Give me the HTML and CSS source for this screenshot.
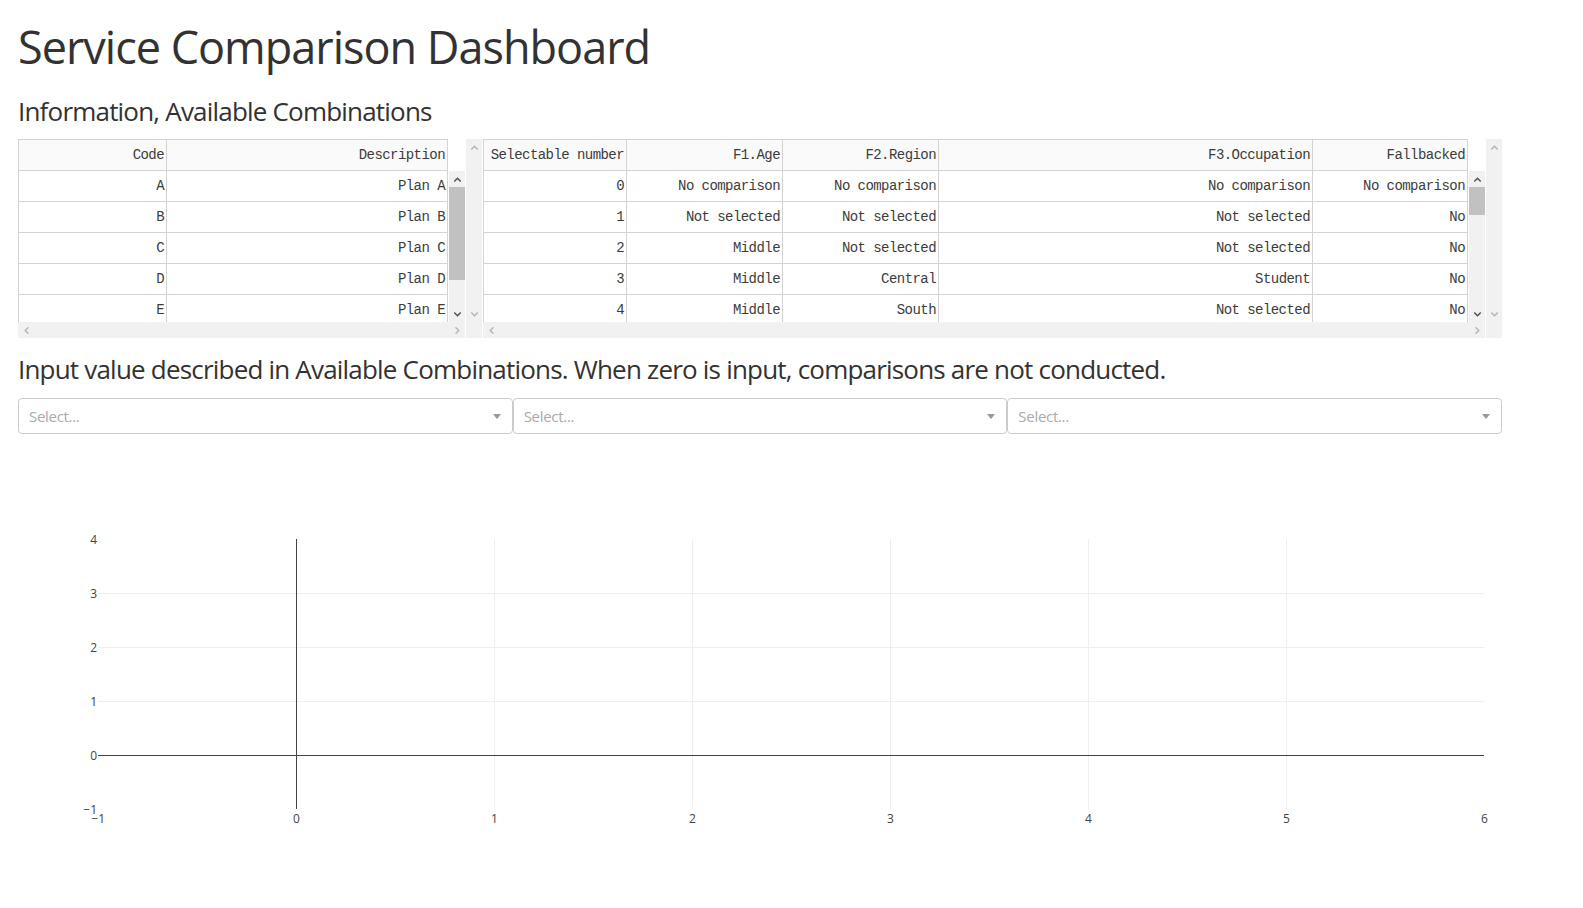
FILE: index.html
```html
<!DOCTYPE html>
<html lang="en">
<head>
<meta charset="utf-8">
<title>Service Comparison Dashboard</title>
<link rel="stylesheet" href="styles.css">
</head>
<body>
<div class="app">
  <h1 class="title">Service Comparison Dashboard</h1>
  <h4 class="section section-info">Information, Available Combinations</h4>

  <div class="tables">
    <!-- left table -->
    <div class="dt dt-left">
      <div class="dt-main">
        <div class="head-line">
          <div class="row row-head cols-left">
            <div class="cell">Code</div><div class="cell last">Description</div>
          </div>
        </div>
        <div class="body-line">
          <div class="body body-left">
            <div class="row cols-left"><div class="cell">A</div><div class="cell last">Plan A</div></div>
            <div class="row cols-left"><div class="cell">B</div><div class="cell last">Plan B</div></div>
            <div class="row cols-left"><div class="cell">C</div><div class="cell last">Plan C</div></div>
            <div class="row cols-left"><div class="cell">D</div><div class="cell last">Plan D</div></div>
            <div class="row cols-left"><div class="cell">E</div><div class="cell last">Plan E</div></div>
          </div>
          <div class="vsb">
            <div class="sb-btn"><svg width="7" height="5" viewBox="0 0 7 5"><polyline class="chev dark" points="0.8,4 3.5,1.2 6.2,4"/></svg></div>
            <div class="sb-track"><div class="thumb thumb-left"></div></div>
            <div class="sb-btn"><svg width="7" height="5" viewBox="0 0 7 5"><polyline class="chev dark" points="0.8,1 3.5,3.8 6.2,1"/></svg></div>
          </div>
        </div>
        <div class="hsb">
          <div class="sb-btn-h"><svg width="5" height="7" viewBox="0 0 5 7"><polyline class="chev light" points="4,0.8 1.2,3.5 4,6.2"/></svg></div>
          <div class="sb-track-h"></div>
          <div class="sb-btn-h"><svg width="5" height="7" viewBox="0 0 5 7"><polyline class="chev light" points="1,0.8 3.8,3.5 1,6.2"/></svg></div>
        </div>
      </div>
      <div class="vsb outer">
        <div class="sb-btn"><svg width="7" height="5" viewBox="0 0 7 5"><polyline class="chev light" points="0.8,4 3.5,1.2 6.2,4"/></svg></div>
        <div class="sb-track"></div>
        <div class="sb-btn"><svg width="7" height="5" viewBox="0 0 7 5"><polyline class="chev light" points="0.8,1 3.5,3.8 6.2,1"/></svg></div>
        <div class="sb-corner"></div>
      </div>
    </div>

    <!-- right table -->
    <div class="dt dt-right">
      <div class="dt-main">
        <div class="head-line">
          <div class="row row-head cols-right">
            <div class="cell">Selectable number</div><div class="cell">F1.Age</div><div class="cell">F2.Region</div><div class="cell">F3.Occupation</div><div class="cell last">Fallbacked</div>
          </div>
        </div>
        <div class="body-line">
          <div class="body body-right">
            <div class="row cols-right"><div class="cell">0</div><div class="cell">No comparison</div><div class="cell">No comparison</div><div class="cell">No comparison</div><div class="cell last">No comparison</div></div>
            <div class="row cols-right"><div class="cell">1</div><div class="cell">Not selected</div><div class="cell">Not selected</div><div class="cell">Not selected</div><div class="cell last">No</div></div>
            <div class="row cols-right"><div class="cell">2</div><div class="cell">Middle</div><div class="cell">Not selected</div><div class="cell">Not selected</div><div class="cell last">No</div></div>
            <div class="row cols-right"><div class="cell">3</div><div class="cell">Middle</div><div class="cell">Central</div><div class="cell">Student</div><div class="cell last">No</div></div>
            <div class="row cols-right"><div class="cell">4</div><div class="cell">Middle</div><div class="cell">South</div><div class="cell">Not selected</div><div class="cell last">No</div></div>
          </div>
          <div class="vsb">
            <div class="sb-btn"><svg width="7" height="5" viewBox="0 0 7 5"><polyline class="chev dark" points="0.8,4 3.5,1.2 6.2,4"/></svg></div>
            <div class="sb-track"><div class="thumb thumb-right"></div></div>
            <div class="sb-btn"><svg width="7" height="5" viewBox="0 0 7 5"><polyline class="chev dark" points="0.8,1 3.5,3.8 6.2,1"/></svg></div>
          </div>
        </div>
        <div class="hsb">
          <div class="sb-btn-h"><svg width="5" height="7" viewBox="0 0 5 7"><polyline class="chev light" points="4,0.8 1.2,3.5 4,6.2"/></svg></div>
          <div class="sb-track-h"></div>
          <div class="sb-btn-h"><svg width="5" height="7" viewBox="0 0 5 7"><polyline class="chev light" points="1,0.8 3.8,3.5 1,6.2"/></svg></div>
        </div>
      </div>
      <div class="vsb outer">
        <div class="sb-btn"><svg width="7" height="5" viewBox="0 0 7 5"><polyline class="chev light" points="0.8,4 3.5,1.2 6.2,4"/></svg></div>
        <div class="sb-track"></div>
        <div class="sb-btn"><svg width="7" height="5" viewBox="0 0 7 5"><polyline class="chev light" points="0.8,1 3.5,3.8 6.2,1"/></svg></div>
        <div class="sb-corner"></div>
      </div>
    </div>
  </div>

  <h4 class="section section-input">Input value described in Available Combinations. When zero is input, comparisons are not conducted.</h4>

  <div class="dropdowns">
    <div class="dd"><span class="ph">Select...</span><span class="arrow-zone"><span class="arrow"></span></span></div>
    <div class="dd"><span class="ph">Select...</span><span class="arrow-zone"><span class="arrow"></span></span></div>
    <div class="dd"><span class="ph">Select...</span><span class="arrow-zone"><span class="arrow"></span></span></div>
  </div>

  <div class="graph-wrap">
    <svg class="graph" width="1546" height="450" viewBox="0 0 1546 450">
      <g class="grid-lines" shape-rendering="crispEdges">
        <line x1="476.33" y1="100.33" x2="476.33" y2="370.33"/>
        <line x1="674.33" y1="100.33" x2="674.33" y2="370.33"/>
        <line x1="872.33" y1="100.33" x2="872.33" y2="370.33"/>
        <line x1="1070.33" y1="100.33" x2="1070.33" y2="370.33"/>
        <line x1="1268.33" y1="100.33" x2="1268.33" y2="370.33"/>
        <line x1="80.33" y1="154.33" x2="1466.33" y2="154.33"/>
        <line x1="80.33" y1="208.33" x2="1466.33" y2="208.33"/>
        <line x1="80.33" y1="262.33" x2="1466.33" y2="262.33"/>
      </g>
      <g class="zero-lines" shape-rendering="crispEdges">
        <line x1="278.33" y1="100.33" x2="278.33" y2="370.33"/>
        <line x1="80.33" y1="316.33" x2="1466.33" y2="316.33"/>
      </g>
      <g class="ticks-y">
        <text x="79" y="104.6">4</text>
        <text x="79" y="158.6">3</text>
        <text x="79" y="212.6">2</text>
        <text x="79" y="266.6">1</text>
        <text x="79" y="320.6">0</text>
        <text x="79" y="374.6">−1</text>
      </g>
      <g class="ticks-x">
        <text x="80.33" y="384">−1</text>
        <text x="278.33" y="384">0</text>
        <text x="476.33" y="384">1</text>
        <text x="674.33" y="384">2</text>
        <text x="872.33" y="384">3</text>
        <text x="1070.33" y="384">4</text>
        <text x="1268.33" y="384">5</text>
        <text x="1466.33" y="384">6</text>
      </g>
    </svg>
  </div>
</div>
</body>
</html>
```

FILE: styles.css
```css
* { box-sizing: border-box; }

html, body { margin: 0; padding: 0; background: #fff; }

body {
  margin: 8px;
  font-family: "Open Sans", "Liberation Sans", Arial, sans-serif;
  font-size: 15px;
  color: rgb(50, 50, 50);
}

.app {
  padding: 12px 10px 0 10px;
}

.title {
  margin: 0 0 20px 0;
  font-size: 45px;
  line-height: 54px;
  letter-spacing: -1px;
  font-weight: 400;
}

.section {
  margin: 0;
  font-size: 26px;
  line-height: 35px;
  letter-spacing: -0.8px;
  font-weight: 400;
}

.section-info { margin-bottom: 10px; }
.section-input { margin: 14px 0 11px 0; }

/* ---------- data tables ---------- */
.tables {
  display: flex;
  width: 1484px;
  height: 199px;
}

.dt { display: flex; height: 199px; }
.dt-left { width: 465px; }
.dt-right { width: 1019px; }

.dt-main {
  display: flex;
  flex-direction: column;
}
.dt-left .dt-main { width: 447px; }
.dt-right .dt-main { width: 1002px; }

.head-line { height: 32px; display: flex; }

.body-line {
  display: flex;
  height: 151px;
}

.body { overflow: hidden; height: 151px; }
.body-left { width: 430px; }
.body-right { width: 985px; }

.row {
  display: grid;
  height: 31px;
  border-bottom: 1px solid #d3d3d3;
}
.row-head {
  height: 32px;
  border-top: 1px solid #d3d3d3;
  background: #fafafa;
}
.cols-left { grid-template-columns: 148px 282px; width: 430px; }
.cols-right { grid-template-columns: 143px 156px 156px 374px 156px; width: 985px; }

.cell {
  border-left: 1px solid #d3d3d3;
  padding: 2px 2px 0 3px;
  text-align: right;
  white-space: nowrap;
  font-family: "Liberation Mono", "DejaVu Sans Mono", monospace;
  font-size: 14px;
  letter-spacing: -0.56px;
  line-height: 27px;
  color: rgb(60, 60, 60);
}
.cell.last { border-right: 1px solid #d3d3d3; }

/* ---------- fake scrollbars ---------- */
.vsb {
  width: 16px;
  margin-left: 1px;
  background: #f1f1f1;
  display: flex;
  flex-direction: column;
}
.vsb.outer { margin-right: 1px; height: 199px; }
.dt-right .vsb.outer { margin-right: 0; }

.sb-btn {
  height: 16px;
  flex: none;
  display: flex;
  align-items: center;
  justify-content: center;
}
.sb-btn svg { display: block; }
.sb-track { flex: 1; }
.sb-corner { height: 16px; flex: none; }

.thumb { background: #c1c1c1; }
.thumb-left { height: 93px; }
.thumb-right { height: 28px; }

.hsb {
  height: 16px;
  background: #f1f1f1;
  display: flex;
}
.sb-btn-h {
  width: 16px;
  flex: none;
  display: flex;
  align-items: center;
  justify-content: center;
}
.sb-btn-h svg { display: block; }
.sb-track-h { flex: 1; }

.chev { fill: none; stroke-width: 1.4; stroke-linecap: square; }
.chev.dark { stroke: #505050; }
.chev.light { stroke: #b4b4b4; }

/* ---------- dropdowns ---------- */
.dropdowns {
  display: flex;
  width: 1484px;
}
.dd {
  flex: 1 1 0;
  height: 36px;
  border: 1px solid #ccc;
  border-radius: 4px;
  display: flex;
  align-items: center;
  background: #fff;
}
.ph {
  flex: 1;
  padding-left: 10px;
  color: #aaa;
  font-size: 15px;
  line-height: 34px;
  letter-spacing: -0.3px;
}
.arrow-zone {
  width: 25px;
  padding-right: 5px;
  display: flex;
  justify-content: center;
  align-items: center;
}
.arrow {
  display: block;
  width: 0;
  height: 0;
  border-style: solid;
  border-width: 5px 4px 0 4px;
  border-color: #999 transparent transparent transparent;
}

/* ---------- graph ---------- */
.graph-wrap { margin-top: 5px; height: 450px; }
.graph { display: block; }
.grid-lines line { stroke: #eee; stroke-width: 1; }
.zero-lines line { stroke: #444; stroke-width: 1; }
.ticks-y text, .ticks-x text {
  font-family: "Open Sans", verdana, arial, sans-serif;
  font-size: 12px;
  fill: #444;
}
.ticks-y text { text-anchor: end; }
.ticks-x text { text-anchor: middle; }
```
